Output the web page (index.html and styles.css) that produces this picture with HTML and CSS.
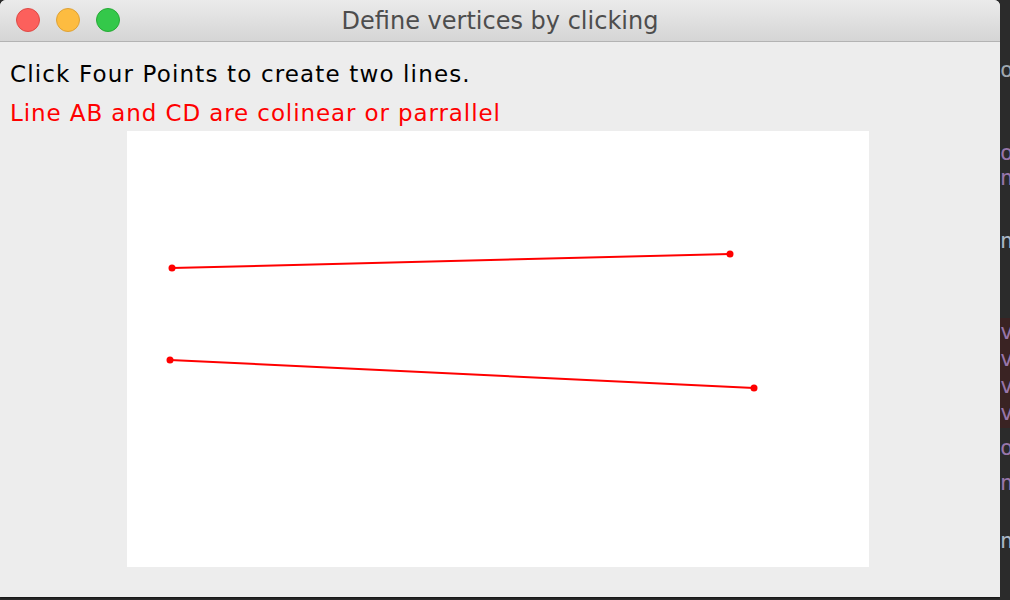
FILE: index.html
```html
<!DOCTYPE html>
<html>
<head>
<meta charset="utf-8">
<link rel="stylesheet" href="styles.css">
</head>
<body>
<div class="desk">
  <div class="window">
    <div class="titlebar">
      <div class="lights">
        <span class="light red"></span>
        <span class="light yellow"></span>
        <span class="light green"></span>
      </div>
      <div class="title">Define vertices by clicking</div>
    </div>
    <div class="content">
      <div class="msg first">Click Four Points to create two lines.</div>
      <div class="msg warn">Line AB and CD are colinear or parrallel</div>
      <div class="canvas">
        <svg width="742" height="436" viewBox="0 0 742 436">
          <line x1="45" y1="137" x2="603" y2="123" stroke="#ff0000" stroke-width="2"/>
          <line x1="43" y1="229" x2="627" y2="257" stroke="#ff0000" stroke-width="2"/>
          <circle cx="45" cy="137" r="3.5" fill="#ff0000"/>
          <circle cx="603" cy="123" r="3.5" fill="#ff0000"/>
          <circle cx="43" cy="229" r="3.5" fill="#ff0000"/>
          <circle cx="627" cy="257" r="3.5" fill="#ff0000"/>
        </svg>
      </div>
    </div>
  </div>
  <div class="behind">
    <div class="frag f1">or</div>
    <div class="frag f2">o</div>
    <div class="frag f3">nT</div>
    <div class="frag f4">ne</div>
    <div class="hl">
      <div class="frag v">v</div>
      <div class="frag v">v</div>
      <div class="frag v">v</div>
      <div class="frag v">v</div>
    </div>
    <div class="frag f5">o.</div>
    <div class="frag f6">n.</div>
    <div class="frag f7">n1</div>
  </div>
</div>
</body>
</html>
```
FILE: styles.css
```css
html, body {
  margin: 0;
  padding: 0;
  background: #2b2b2b;
  width: 1010px;
  height: 600px;
  overflow: hidden;
}
.desk {
  display: flex;
  height: 600px;
}
.window {
  width: 1000px;
  flex: none;
  height: 597px;
  background: #ededed;
  border-radius: 6px 6px 0 0;
  overflow: hidden;
  display: flex;
  flex-direction: column;
  box-shadow: 0 1px 2px rgba(0,0,0,0.6);
}
.titlebar {
  height: 41px;
  flex: none;
  background: linear-gradient(#ebebeb, #d5d5d5);
  border-bottom: 1px solid #b3b3b3;
  position: relative;
  display: flex;
  align-items: center;
  justify-content: center;
}
.lights {
  position: absolute;
  left: 16px;
  top: 8px;
  display: flex;
  gap: 16px;
}
.light {
  width: 24px;
  height: 24px;
  border-radius: 50%;
  box-sizing: border-box;
}
.red { background: #fc605c; border: 1px solid #de4a45; }
.yellow { background: #fdbc40; border: 1px solid #dea236; }
.green { background: #34c84a; border: 1px solid #27aa35; }
.title {
  font-family: "DejaVu Sans", sans-serif;
  font-size: 24px;
  color: #4d4d4d;
}
.content {
  padding: 19px 0 0 10px;
  display: flex;
  flex-direction: column;
}
.msg {
  font-family: "DejaVu Sans", sans-serif;
  font-size: 23px;
  line-height: 26px;
  height: 26px;
  color: #000;
  letter-spacing: 1.15px;
  white-space: nowrap;
}
.first {
  margin-bottom: 13px;
}
.warn {
  color: #ff0000;
  letter-spacing: 0.9px;
}
.canvas {
  margin-left: 117px;
  margin-top: 5px;
  width: 742px;
  height: 436px;
  background: #ffffff;
}
.canvas svg { display: block; }
.behind {
  flex: 1;
  position: relative;
  overflow: hidden;
  background: #2b2b2b;
  font-family: "DejaVu Sans Mono", monospace;
  font-size: 22px;
  color: #8a9aa8;
}
.frag { position: absolute; left: 0; white-space: nowrap; }
.f1 { top: 57px; color: #a0a8b0; }
.f2 { top: 140px; color: #9876aa; }
.f3 { top: 165px; color: #9876aa; }
.f4 { top: 228px; color: #a9b7c6; }
.hl {
  position: absolute;
  top: 318px;
  left: 0;
  width: 10px;
  height: 110px;
  background: #3a2323;
}
.v { position: relative; color: #9876aa; height: 27px; line-height: 27px; }
.f5 { top: 435px; color: #9876aa; }
.f6 { top: 470px; color: #9876aa; }
.f7 { top: 528px; color: #a9b7c6; }
```
